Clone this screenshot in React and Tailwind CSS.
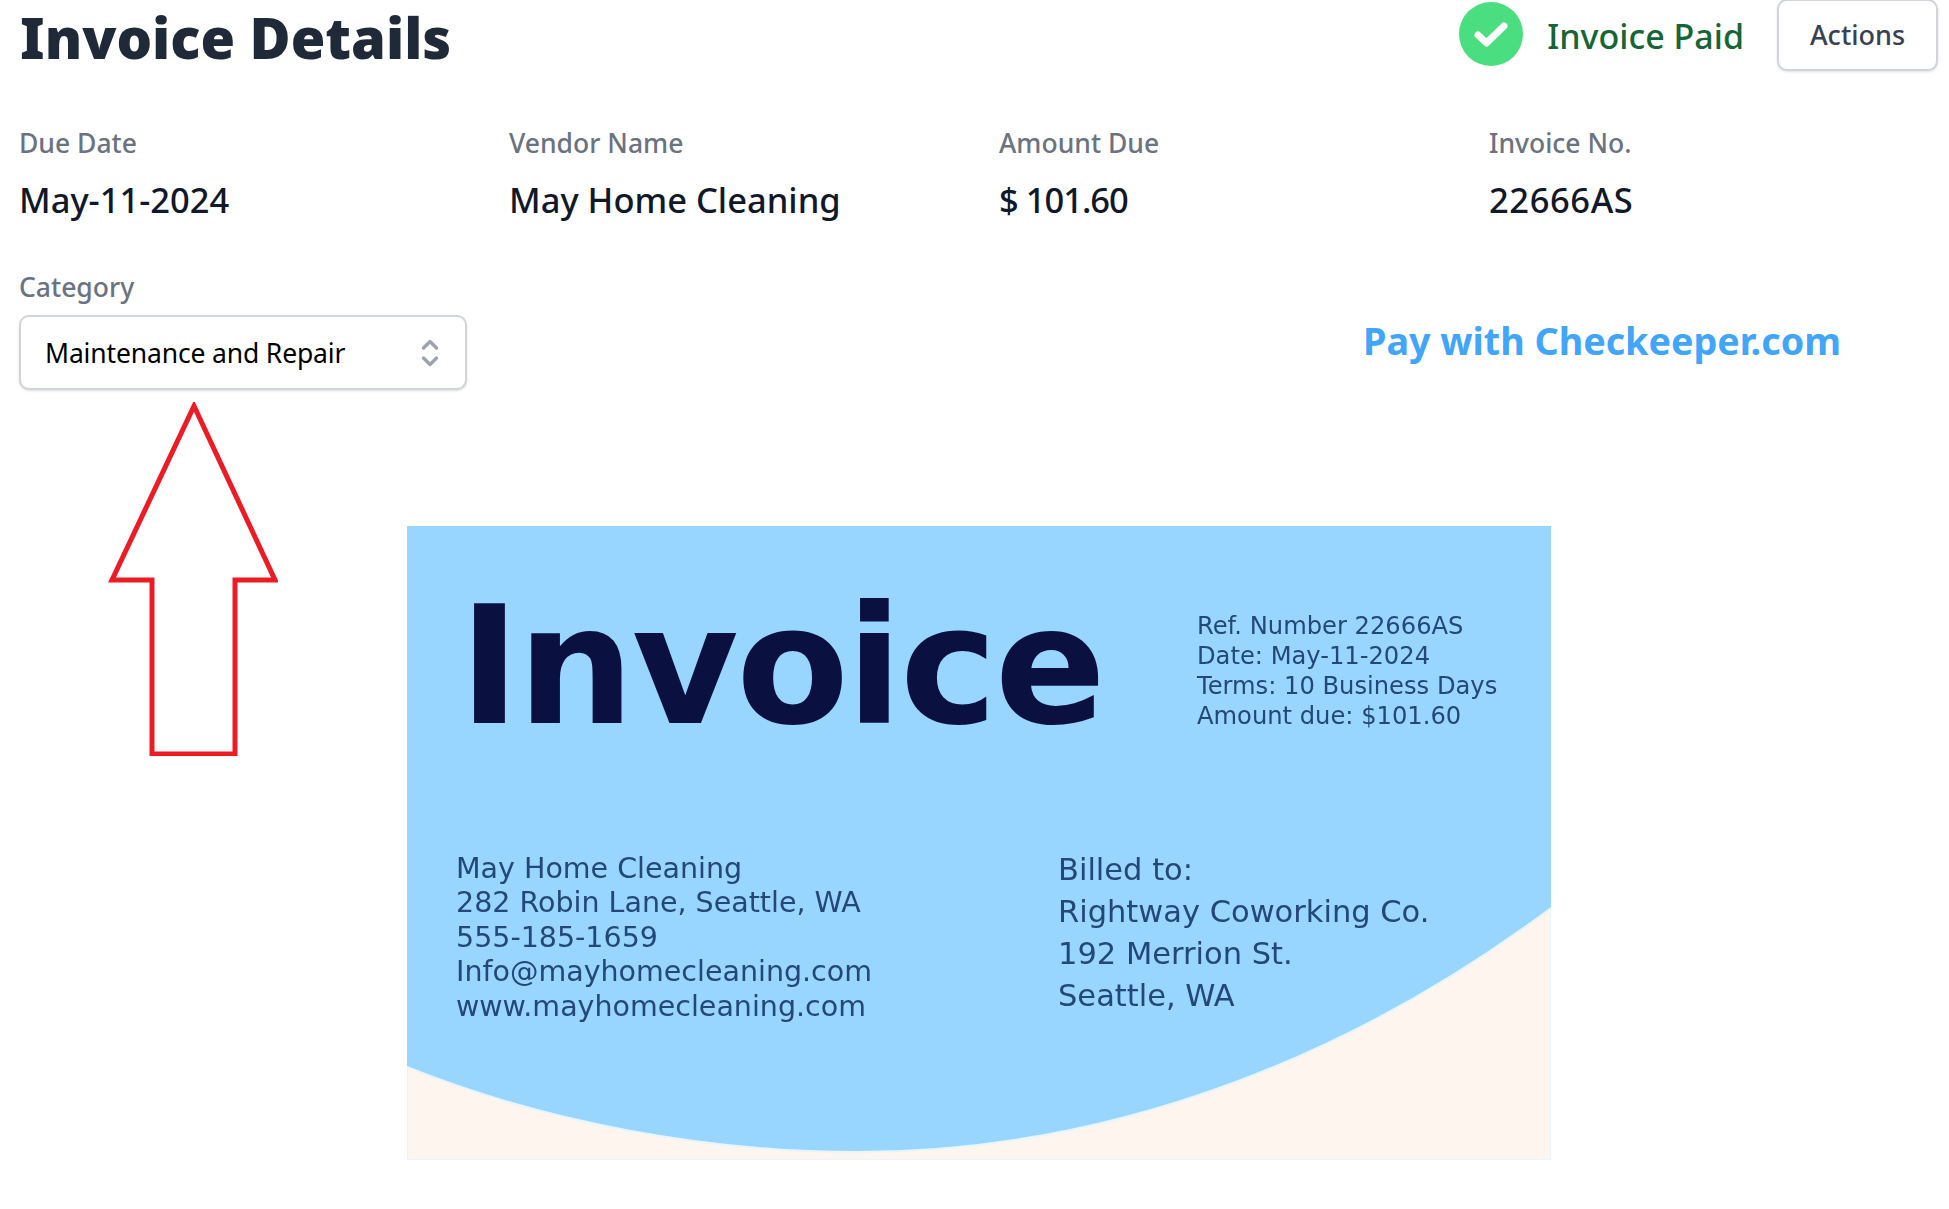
const fields = [
  { label: 'Due Date', value: 'May-11-2024', valueClass: '' },
  { label: 'Vendor Name', value: 'May Home Cleaning', valueClass: '' },
  { label: 'Amount Due', value: '$ 101.60', valueClass: 'tracking-[-1px]' },
  { label: 'Invoice No.', value: '22666AS', valueClass: 'tracking-[0.6px]' },
];

const uiFont = { fontFamily: '"Noto Sans", "Open Sans", sans-serif' };
const docFont = { fontFamily: '"DejaVu Sans", Inter, sans-serif' };

// The scanned invoice picture, redrawn with real text
function InvoicePicture() {
  return (
    <div className="relative ml-[129px] mt-[126px] h-[634px] w-[1144px] shrink-0 overflow-hidden bg-[#99d6ff] text-[#24477a]" style={docFont}>
      <svg className="absolute inset-0" width="1144" height="634" viewBox="0 0 1144 634">
        <path d="M0 541 C140 597 300 626 450 626 C720 626 960 520 1144 382 L1144 634 L0 634 Z" fill="#fef6ee" stroke="#e6f5ff" strokeWidth="2" />
      </svg>

      <div className="relative flex items-start pl-[52px] pt-[56px]">
        <div className="w-[738px] text-[164px] font-bold leading-[170px] tracking-[-2.5px] text-[#0a1040]">Invoice</div>
        <div className="pt-[29px] text-[24.2px] leading-[30px] blur-[0.4px]">
          <div>Ref. Number 22666AS</div>
          <div>Date: May-11-2024</div>
          <div>Terms: 10 Business Days</div>
          <div>Amount due: $101.60</div>
        </div>
      </div>

      <div className="relative mt-[100px] flex items-start pl-[49px] blur-[0.4px]">
        <div className="w-[602px] text-[28.5px] leading-[34.4px]">
          <div>May Home Cleaning</div>
          <div>282 Robin Lane, Seattle, WA</div>
          <div>555-185-1659</div>
          <div>Info@mayhomecleaning.com</div>
          <div>www.mayhomecleaning.com</div>
        </div>
        <div className="-mt-[3px] text-[30.5px] leading-[42px]">
          <div>Billed to:</div>
          <div>Rightway Coworking Co.</div>
          <div>192 Merrion St.</div>
          <div>Seattle, WA</div>
        </div>
      </div>
    </div>
  );
}

export default function App() {
  return (
    <div className="h-[1209px] w-[1949px] overflow-hidden bg-white" style={uiFont}>
      {/* Header */}
      <div className="flex h-[71px] items-center justify-between pl-5 pr-[11px]">
        <h1 className="pt-[3px] text-[56px] font-black leading-[64px] text-[#1f2937]">Invoice Details</h1>
        <div className="flex items-center">
          <div className="-mt-[3px] flex h-[64px] w-[64px] items-center justify-center rounded-full bg-[#4ade80]">
            <svg width="64" height="64" viewBox="0 0 64 64" fill="none" stroke="white" strokeWidth="7" strokeLinecap="round" strokeLinejoin="round">
              <path d="M19 33 L27.5 41 L45 24" />
            </svg>
          </div>
          <span className="ml-6 text-[34px] font-medium leading-[48px] text-[#166534]">Invoice Paid</span>
          <button className="ml-[33px] h-[72px] w-[161px] -translate-y-px rounded-[10px] border-2 border-[#d1d5db] bg-white pt-[2px] text-[27px] font-medium text-[#374151] shadow-sm">
            Actions
          </button>
        </div>
      </div>

      {/* Summary fields */}
      <div className="mt-[52px] grid grid-cols-[repeat(4,490px)] pl-[19px]">
        {fields.map((field) => (
          <div key={field.label}>
            <div className="text-[26.5px] font-medium leading-[40px] text-[#6b7280]">{field.label}</div>
            <div className={`mt-[17px] text-[34.5px] font-medium leading-[40px] text-[#111827] ${field.valueClass}`}>{field.value}</div>
          </div>
        ))}
      </div>

      {/* Category select and pay link */}
      <div className="mt-[47px] flex items-start pl-[19px]">
        <div className="w-[448px]">
          <div className="text-[26.5px] font-medium leading-[40px] text-[#6b7280]">Category</div>
          <div className="mt-2 flex h-[75px] items-center justify-between rounded-[10px] border-2 border-[#d1d5db] bg-white pl-[24px] pr-[26px] shadow-sm">
            <span className="pt-[2px] text-[26.5px] tracking-[-0.15px] text-black">Maintenance and Repair</span>
            <svg width="18" height="30" viewBox="0 0 18 30" fill="none" stroke="#9ca3af" strokeWidth="3.4" strokeLinecap="round" strokeLinejoin="round">
              <path d="M2.5 10 L9 3.5 L15.5 10" />
              <path d="M2.5 20 L9 26.5 L15.5 20" />
            </svg>
          </div>
        </div>
        <a className="ml-[896px] mt-[49px] text-[37.7px] font-bold leading-[50px] text-[#41a5fa]">Pay with Checkeeper.com</a>
      </div>

      {/* Arrow and invoice picture */}
      <div className="mt-[10px] flex items-start">
        <svg className="ml-[108px] mt-[2px] shrink-0" width="170" height="354" viewBox="108 400 170 354" fill="none" stroke="#ed1c24" strokeWidth="5" strokeLinejoin="miter">
          <path d="M194 404 L275 578 L235 578 L235 752 L152 752 L152 578 L112 578 Z" />
        </svg>
        <InvoicePicture />
      </div>
    </div>
  );
}
